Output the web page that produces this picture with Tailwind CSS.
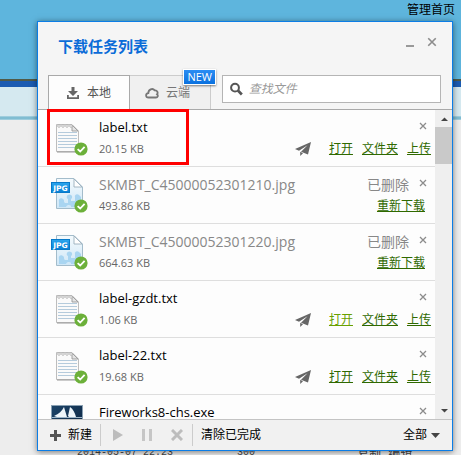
<!DOCTYPE html>
<html lang="zh-CN">
<head>
<meta charset="utf-8">
<meta name="viewport" content="width=device-width, initial-scale=1">
<title>下载任务列表</title>
<script src="https://cdn.jsdelivr.net/npm/@tailwindcss/browser@4"></script>
</head>
<body class="relative h-screen overflow-hidden bg-[#ededed] font-['Open_Sans','Noto_Sans_CJK_SC',sans-serif] text-xs text-black">

<svg class="absolute size-0" aria-hidden="true">
  <defs>
    <linearGradient id="blue" x1="0" y1="0" x2="0" y2="1"><stop offset="0" stop-color="#2ba6ee"/><stop offset="1" stop-color="#0a80d4"/></linearGradient>
    <linearGradient id="sheet" x1="0" y1="0" x2="0" y2="1"><stop offset="0" stop-color="#f4fafd"/><stop offset="1" stop-color="#cfe7f7"/></linearGradient>
    <linearGradient id="navy" x1="0" y1="0" x2="1" y2="1"><stop offset="0" stop-color="#1d4468"/><stop offset="1" stop-color="#0b2440"/></linearGradient>
    <symbol id="done" viewBox="0 0 14 14">
      <circle cx="7" cy="7" r="6.6" fill="#6cb03a"/>
      <path d="M3.6 7.1 6.2 9.5 10.6 4.8" fill="none" stroke="#fff" stroke-width="1.8"/>
    </symbol>
    <symbol id="txt" viewBox="0 0 40 36">
      <path d="M6.5 4.5H22L28.500 11V31.500H6.500Z" fill="#fafafa" stroke="#bdbdbd"/>
      <path d="M7 32H29" stroke="#9a9a9a"/>
      <path d="M22 5V11H28Z" fill="#e4e4e4" stroke="#999" stroke-width=".9"/>
      <g fill="#fff" stroke="#aaa" stroke-width=".8"><circle cx="9" cy="6" r="1.300"/><circle cx="13" cy="6" r="1.300"/><circle cx="17" cy="6" r="1.300"/><circle cx="21" cy="6" r="1.300"/></g>
      <path d="M8 12.500H27M8 15.500H27M8 18.500H27M8 21.500H27M8 24.500H27M8 27.500H27" stroke="#b5cbdc"/>
      <use href="#done" x="24" y="22" width="14" height="14"/>
    </symbol>
    <symbol id="jpg" viewBox="0 0 40 36">
      <path d="M6.500 1.500H24L32.500 10V31.500H6.500Z" fill="url(#sheet)" stroke="#a3bccb"/>
      <path d="M9 30V25C8 22 11 20 13 22C15 23 13 25 15 26H18V22C15 20 18 16 21 18C23 19 22 22 21 22V24H25V20C24 18 27 16 29 18L31 20V30H21C22 28 17 27 16 30Z" fill="#a9d5f1"/>
      <path d="M24 2V10H32Z" fill="#fff" stroke="#9aafbc" stroke-width=".9"/>
      <rect x="1.500" y="5.500" width="18" height="10" fill="url(#blue)" stroke="#087ac9"/>
      <text x="10.500" y="13.500" text-anchor="middle" font-family="DejaVu Sans" font-size="7.500" font-weight="bold" fill="#fff">JPG</text>
      <use href="#done" x="24" y="22" width="14" height="14"/>
    </symbol>
    <symbol id="exe" viewBox="0 0 40 36">
      <rect x="1.500" y=".5" width="31" height="31" fill="url(#navy)" stroke="#8aa0b2"/>
      <path d="M4 11C9 9 12 6 14 2L17 12H7ZM18 11 20 2C23 4 25 8 26 12H19Z" fill="#eef5fa"/>
      <path d="M2 12.500H32" stroke="#9db5c8"/>
    </symbol>
    <symbol id="plane" viewBox="0 0 16 14">
      <path d="M16 0 0 7 4 8.700 12.500 3.200 6 9.700 13 12.500ZM5.200 9.700V14L8 11.200Z" fill="#666"/>
    </symbol>
    <symbol id="x" viewBox="0 0 8 8"><path d="M1 1 7 7M7 1 1 7" stroke="#8c8c8c" stroke-width="1.300"/></symbol>
  </defs>
</svg>

<div class="flex h-full flex-col">
  <header class="flex h-[79px] justify-end bg-[#5eb5dd] pr-1.5"><a href="#" class="h-5 leading-5">管理首页</a></header>
  <div class="h-2 border-t-2 border-[#505a48] bg-[#1b5bb1]"></div>
  <div class="h-[29px] bg-[#d5e9f0]"></div>
  <div class="h-1 border-y border-[#9fcddd] bg-[#80bdd2]"></div>
  <div class="flex-1"></div>
  <div class="flex h-2 shrink-0 overflow-hidden pl-[77px] font-['Liberation_Mono','Noto_Sans_CJK_SC',monospace] text-[10px] leading-3 text-[#444]">
    <span class="w-40">2014-05-07 22:23</span><span class="w-[120px]">300</span><span class="text-xs leading-4">复制 编辑</span>
  </div>
</div>

<section aria-labelledby="title" class="absolute top-[21px] right-2 bottom-1 left-[37px] flex flex-col border border-[#0b7de6] bg-[#f5f5f5] shadow-[0_1px_6px_rgba(0,0,0,0.5)]">
  <div class="flex h-[53px] shrink-0 justify-between pt-3 pr-3.5 pl-5">
    <h1 id="title" class="h-6 text-[15px] leading-6 font-bold text-[#0b6cd8]">下载任务列表</h1>
    <div class="flex h-4 gap-2.5">
      <button type="button" aria-label="最小化" class="flex w-3 items-end justify-center pb-[3px]"><svg class="h-0.5 w-2" viewBox="0 0 8 2"><rect width="8" height="2" fill="#999"/></svg></button>
      <button type="button" aria-label="关闭" class="flex w-3 items-center justify-center"><svg class="size-2.5"><use href="#x"/></svg></button>
    </div>
  </div>

  <div class="flex h-[35px] shrink-0 border-b border-[#a9a9a9] pr-[11px] pl-2.5">
    <button type="button" class="-mb-px flex h-[35px] w-[82px] items-center gap-2 border border-b-0 border-[#a9a9a9] bg-[#fdfdfd] pl-[18px] text-[#555]">
      <svg class="h-3 w-3" viewBox="0 0 12 12"><path d="M4.500 0H7.500V4H11L6 9 1 4H4.500ZM0 8H1.800V10.200H10.200V8H12V12H0Z" fill="#666"/></svg>
      本地</button>
    <button type="button" class="relative flex h-[34px] w-[81px] items-center gap-[7px] border-t border-r border-[#ccc] bg-[#f0f0f0] pl-[15px] text-[#777]">
      <svg class="h-3 w-3.5" viewBox="0 0 14 12"><path d="M3.500 10.500C.4 10.500 .3 6.500 3.300 6.200C3.300 2.500 7.500 .5 9.700 3.400C12.300 3 13.300 6 12 7.300C13.600 8.600 12.600 10.500 11 10.500Z" fill="none" stroke="#777" stroke-width="1.800"/></svg>
      云端
      <span class="absolute -top-[7px] -right-1.5 border border-white bg-linear-to-b from-[#2a8df3] to-[#0871df] px-[3px] text-[11px] leading-[14px] text-white shadow-[0_1px_2px_rgba(0,0,0,0.5)]">NEW</span>
    </button>
    <label class="ml-[11px] flex h-7 flex-1 items-center gap-1.5 border border-[#b5b5b5] bg-white pl-[7px]">
      <svg class="size-3.5" viewBox="0 0 14 14" aria-hidden="true"><circle cx="5.500" cy="5.500" r="4.300" fill="none" stroke="#555" stroke-width="2.200"/><path d="M8.700 8.700 13 13" stroke="#555" stroke-width="3"/></svg>
      <input type="search" aria-label="查找文件" placeholder="查找文件" class="w-full min-w-0 bg-transparent italic outline-none placeholder:text-[#999]">
    </label>
  </div>

  <div class="flex min-h-0 flex-1 bg-[#fdfdfd]">
    <ul class="min-w-0 flex-1 overflow-hidden">
      <li class="flex h-[57px] gap-2 border-b border-[#dedede] pt-2 pr-1 pl-3">
        <svg class="mt-0.5 h-9 w-10 shrink-0"><use href="#txt"/></svg>
        <div class="flex-1 pl-px">
          <div class="flex h-5 items-center justify-between text-[13px]"><span>label.txt</span><button type="button" aria-label="移除" class="flex size-4 items-center justify-center self-start"><svg class="size-2"><use href="#x"/></svg></button></div>
          <div class="flex h-[22px] items-center gap-[9px] text-[#2f6900]"><span class="flex-1 text-[11px] text-[#666]">20.15 KB</span><button type="button" aria-label="发送" class="mr-[9px]"><svg class="h-3.5 w-4"><use href="#plane"/></svg></button><a href="#" class="underline">打开</a><a href="#" class="underline">文件夹</a><a href="#" class="underline">上传</a></div>
        </div>
      </li>
      <li class="flex h-[57px] gap-2 border-b border-[#dedede] pt-2 pr-1 pl-3">
        <svg class="mt-0.5 h-9 w-10 shrink-0"><use href="#jpg"/></svg>
        <div class="flex-1 pl-px">
          <div class="flex h-5 items-center gap-1.5 text-sm text-[#888]"><span class="flex-1">SKMBT_C45000052301210.jpg</span><span>已删除</span><button type="button" aria-label="移除" class="flex size-4 items-center justify-center self-start"><svg class="size-2"><use href="#x"/></svg></button></div>
          <div class="flex h-[22px] items-center justify-between pr-1.5 text-[#2f6900]"><span class="text-[11px] text-[#666]">493.86 KB</span><a href="#" class="underline">重新下载</a></div>
        </div>
      </li>
      <li class="flex h-[57px] gap-2 border-b border-[#dedede] pt-2 pr-1 pl-3">
        <svg class="mt-0.5 h-9 w-10 shrink-0"><use href="#jpg"/></svg>
        <div class="flex-1 pl-px">
          <div class="flex h-5 items-center gap-1.5 text-sm text-[#888]"><span class="flex-1">SKMBT_C45000052301220.jpg</span><span>已删除</span><button type="button" aria-label="移除" class="flex size-4 items-center justify-center self-start"><svg class="size-2"><use href="#x"/></svg></button></div>
          <div class="flex h-[22px] items-center justify-between pr-1.5 text-[#2f6900]"><span class="text-[11px] text-[#666]">664.63 KB</span><a href="#" class="underline">重新下载</a></div>
        </div>
      </li>
      <li class="flex h-[57px] gap-2 border-b border-[#dedede] pt-2 pr-1 pl-3">
        <svg class="mt-0.5 h-9 w-10 shrink-0"><use href="#txt"/></svg>
        <div class="flex-1 pl-px">
          <div class="flex h-5 items-center justify-between text-[13px]"><span>label-gzdt.txt</span><button type="button" aria-label="移除" class="flex size-4 items-center justify-center self-start"><svg class="size-2"><use href="#x"/></svg></button></div>
          <div class="flex h-[22px] items-center gap-[9px] text-[#2f6900]"><span class="flex-1 text-[11px] text-[#666]">1.06 KB</span><button type="button" aria-label="发送" class="mr-[9px]"><svg class="h-3.5 w-4"><use href="#plane"/></svg></button><a href="#" class="text-[#69a000] underline">打开</a><a href="#" class="underline">文件夹</a><a href="#" class="underline">上传</a></div>
        </div>
      </li>
      <li class="flex h-[57px] gap-2 border-b border-[#dedede] pt-2 pr-1 pl-3">
        <svg class="mt-0.5 h-9 w-10 shrink-0"><use href="#txt"/></svg>
        <div class="flex-1 pl-px">
          <div class="flex h-5 items-center justify-between text-[13px]"><span>label-22.txt</span><button type="button" aria-label="移除" class="flex size-4 items-center justify-center self-start"><svg class="size-2"><use href="#x"/></svg></button></div>
          <div class="flex h-[22px] items-center gap-[9px] text-[#2f6900]"><span class="flex-1 text-[11px] text-[#666]">19.68 KB</span><button type="button" aria-label="发送" class="mr-[9px]"><svg class="h-3.5 w-4"><use href="#plane"/></svg></button><a href="#" class="underline">打开</a><a href="#" class="underline">文件夹</a><a href="#" class="underline">上传</a></div>
        </div>
      </li>
      <li class="flex h-[57px] gap-2 pt-2 pr-1 pl-3">
        <svg class="mt-0.5 h-9 w-10 shrink-0"><use href="#exe"/></svg>
        <div class="flex-1 pl-px">
          <div class="flex h-5 items-center justify-between text-[13px]"><span>Fireworks8-chs.exe</span><button type="button" aria-label="移除" class="flex size-4 items-center justify-center self-start"><svg class="size-2"><use href="#x"/></svg></button></div>
        </div>
      </li>
    </ul>
    <div class="flex w-[17px] shrink-0 flex-col items-center bg-[#efefef]" aria-hidden="true">
      <svg class="h-[17px] w-4 shrink-0" viewBox="0 0 16 17"><path d="M5 11 8.500 7.500 12 11Z" fill="#444"/></svg>
      <div class="h-[37px] w-full bg-[#c9c9c9]"></div>
      <div class="flex-1"></div>
      <svg class="h-[17px] w-4 shrink-0" viewBox="0 0 16 17"><path d="M5 7 8.500 10.500 12 7Z" fill="#444"/></svg>
    </div>
  </div>

  <footer class="flex h-[31px] shrink-0 items-center border-t border-[#c4c4c4] bg-[#f1f1f1] px-3">
    <button type="button" class="flex items-center gap-[7px]"><svg class="size-[11px]" viewBox="0 0 11 11"><path d="M4 0H7V4H11V7H7V11H4V7H0V4H4Z" fill="#555"/></svg>新建</button>
    <div class="mx-2 flex h-[22px] items-center gap-[19px] border-x border-[#ccc] pr-[9px] pl-3">
      <button type="button" aria-label="开始"><svg class="h-3 w-2.5" viewBox="0 0 10 12"><path d="M0 0 10 6 0 12Z" fill="#bdbdbd"/></svg></button>
      <button type="button" aria-label="暂停"><svg class="h-3 w-2.5" viewBox="0 0 10 12"><path d="M0 0H3V12H0ZM7 0H10V12H7Z" fill="#c6c6c6"/></svg></button>
      <button type="button" aria-label="删除"><svg class="size-3" viewBox="0 0 12 12"><path d="M1 1 11 11M11 1 1 11" stroke="#bdbdbd" stroke-width="3"/></svg></button>
    </div>
    <button type="button">清除已完成</button>
    <button type="button" class="ml-auto flex items-center gap-1">全部<svg class="h-[5px] w-[9px]" viewBox="0 0 9 5"><path d="M0 0H9L4.500 5Z" fill="#444"/></svg></button>
  </footer>

  <div class="pointer-events-none absolute top-[87px] left-[9px] h-14 w-[142px] border-3 border-[#ff0000]"></div>
</section>
</body>
</html>
